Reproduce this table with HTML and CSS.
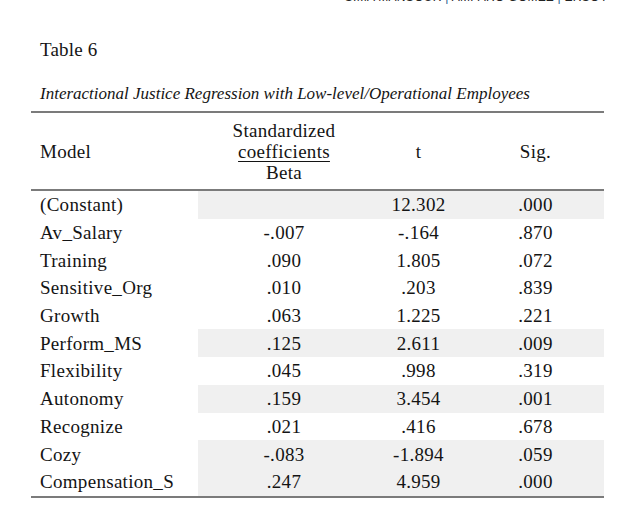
FILE: index.html
```html
<!DOCTYPE html>
<html lang="en">
<head>
<meta charset="utf-8">
<title>Table 6</title>
<link rel="stylesheet" href="styles.css">
</head>
<body>
<div class="running-head">Sima Mansour <span class="bar">|</span> Amparo Gómez <span class="bar">|</span> Ersoy</div>
<main class="page">
  <p class="table-label">Table 6</p>
  <p class="table-title">Interactional Justice Regression with Low-level/Operational Employees</p>
  <table class="reg">
    <colgroup>
      <col class="c-model">
      <col class="c-beta">
      <col class="c-t">
      <col class="c-sig">
    </colgroup>
    <thead>
      <tr>
        <th class="model">Model</th>
        <th>Standardized<br><span class="ul">coefficients</span><br>Beta</th>
        <th>t</th>
        <th>Sig.</th>
      </tr>
    </thead>
    <tbody>
      <tr class="shade"><td>(Constant)</td><td></td><td>12.302</td><td>.000</td></tr>
      <tr><td>Av_Salary</td><td>-.007</td><td>-.164</td><td>.870</td></tr>
      <tr><td>Training</td><td>.090</td><td>1.805</td><td>.072</td></tr>
      <tr><td>Sensitive_Org</td><td>.010</td><td>.203</td><td>.839</td></tr>
      <tr><td>Growth</td><td>.063</td><td>1.225</td><td>.221</td></tr>
      <tr class="shade"><td>Perform_MS</td><td>.125</td><td>2.611</td><td>.009</td></tr>
      <tr><td>Flexibility</td><td>.045</td><td>.998</td><td>.319</td></tr>
      <tr class="shade"><td>Autonomy</td><td>.159</td><td>3.454</td><td>.001</td></tr>
      <tr><td>Recognize</td><td>.021</td><td>.416</td><td>.678</td></tr>
      <tr class="shade"><td>Cozy</td><td>-.083</td><td>-1.894</td><td>.059</td></tr>
      <tr class="shade"><td>Compensation_S</td><td>.247</td><td>4.959</td><td>.000</td></tr>
    </tbody>
  </table>
</main>
</body>
</html>
```

FILE: styles.css
```css
html, body {
  margin: 0;
  padding: 0;
  background: #ffffff;
}

body {
  font-family: "Liberation Serif", "Times New Roman", serif;
  color: #141414;
  width: 633px;
  height: 513px;
  overflow: hidden;
}

.running-head {
  margin-top: -11px;
  height: 14px;
  padding-right: 25px;
  text-align: right;
  font-family: "Liberation Sans", Arial, sans-serif;
  font-size: 12px;
  line-height: 16px;
  letter-spacing: 0.3px;
  text-transform: uppercase;
  color: #222;
}

.running-head .bar {
  color: #1d5f8f;
}

.page {
  padding-left: 31px;
  padding-right: 29px;
}

.table-label {
  margin: 35px 0 0 9px;
  font-size: 19px;
  line-height: 24px;
  letter-spacing: 0.2px;
}

.table-title {
  margin: 20px 0 0 9px;
  font-size: 17px;
  line-height: 24px;
  font-style: italic;
}

.reg {
  margin-top: 5px;
  width: 573px;
  border-collapse: collapse;
  border-top: 2px solid #7b7b7b;
  border-bottom: 2px solid #7b7b7b;
  font-size: 19px;
  letter-spacing: 0.3px;
}

.c-model { width: 167px; }
.c-beta { width: 172px; }
.c-t { width: 97px; }
.c-sig { width: 137px; }

.reg thead th {
  font-weight: normal;
  text-align: center;
  line-height: 21px;
  padding: 7px 0 6px;
  border-bottom: 2px solid #7b7b7b;
}

.reg thead th.model {
  text-align: left;
  padding-left: 9px;
}

.ul {
  text-decoration: underline;
  text-decoration-thickness: 1px;
  text-underline-offset: 3px;
}

.reg td {
  height: 26.7px;
  padding: 1px 0 0;
  line-height: 20px;
  text-align: center;
}

.reg td:first-child {
  text-align: left;
  padding-left: 9px;
}

.reg tr.shade td {
  background: #f0f0f0;
}

.reg tr.shade td:first-child {
  background: transparent;
}
```
